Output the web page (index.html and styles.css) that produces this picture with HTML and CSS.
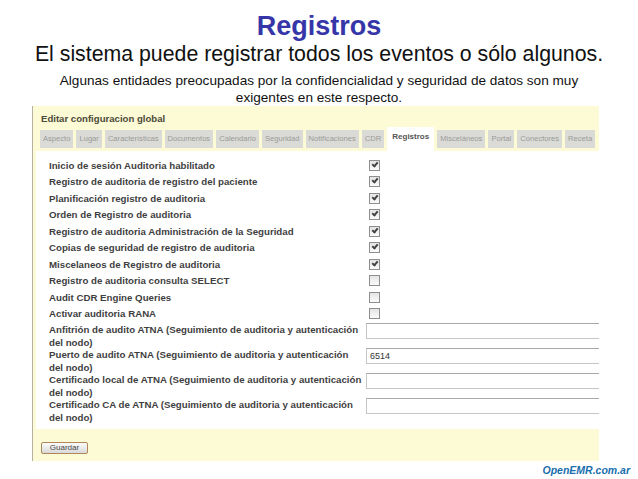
FILE: index.html
```html
<!DOCTYPE html>
<html>
<head>
    <meta charset="utf-8">
    <link rel="stylesheet" href="styles.css">
</head>
<body>
    <div class="slide">
        <h1 class="title">Registros</h1>
        <p class="lead">El sistema puede registrar todos los eventos o sólo algunos.</p>
        <p class="note">Algunas entidades preocupadas por la confidencialidad y seguridad de datos son muy<br>exigentes en este respecto.</p>

        <div class="panel">
            <div class="panel-head">Editar configuracion global</div>
            <ul class="tabs">
                <li>Aspecto</li>
                <li>Lugar</li>
                <li>Características</li>
                <li>Documentos</li>
                <li>Calendario</li>
                <li>Seguridad</li>
                <li>Notificaciones</li>
                <li>CDR</li>
                <li class="active">Registros</li>
                <li>Misceláneos</li>
                <li>Portal</li>
                <li>Conectores</li>
                <li>Receta</li>
            </ul>

            <div class="panel-body">
                <div class="row"><label>Inicio de sesión Auditoria habilitado</label><span class="check on"></span></div>
                <div class="row"><label>Registro de auditoria de registro del paciente</label><span class="check on"></span></div>
                <div class="row"><label>Planificación registro de auditoria</label><span class="check on"></span></div>
                <div class="row"><label>Orden de Registro de auditoria</label><span class="check on"></span></div>
                <div class="row"><label>Registro de auditoria Administración de la Seguridad</label><span class="check on"></span></div>
                <div class="row"><label>Copias de seguridad de registro de auditoria</label><span class="check on"></span></div>
                <div class="row"><label>Miscelaneos de Registro de auditoria</label><span class="check on"></span></div>
                <div class="row"><label>Registro de auditoria consulta SELECT</label><span class="check"></span></div>
                <div class="row"><label>Audit CDR Engine Queries</label><span class="check"></span></div>
                <div class="row"><label>Activar auditoria RANA</label><span class="check"></span></div>
                <div class="row tall"><label>Anfitrión de audito ATNA (Seguimiento de auditoria y autenticación<br>del nodo)</label><input type="text" value=""></div>
                <div class="row tall"><label>Puerto de audito ATNA (Seguimiento de auditoria y autenticación<br>del nodo)</label><input type="text" value="6514"></div>
                <div class="row tall"><label>Certificado local de ATNA (Seguimiento de auditoria y autenticación<br>del nodo)</label><input type="text" value=""></div>
                <div class="row tall"><label>Certificado CA de ATNA (Seguimiento de auditoria y autenticación<br>del nodo)</label><input type="text" value=""></div>
            </div>

            <div class="panel-foot">
                <button type="button">Guardar</button>
            </div>
        </div>

        <div class="brand">OpenEMR.com.ar</div>
    </div>
</body>
</html>
```

FILE: styles.css
```css
body {
    margin: 0;
    background: #fff;
    font-family: "Liberation Sans", Arial, sans-serif;
    color: #111;
}

.slide {
    width: 638px;
    height: 479px;
    overflow: hidden;
}

.title {
    margin: 10px 0 0;
    font-size: 27px;
    line-height: 32px;
    text-align: center;
    color: #3636a8;
}

.lead {
    margin: 0;
    font-size: 21.3px;
    line-height: 25px;
    text-align: center;
}

.note {
    margin: 5px 0 0;
    font-size: 13.6px;
    line-height: 17px;
    text-align: center;
}

/* screenshot of the settings page */
.panel {
    margin: 0 0 0 32px;
    width: 566px;
    border-left: 1px solid #b3b2a2;
    background: #fdfad6;
    overflow: hidden;
}

.panel-head {
    height: 21px;
    padding: 7px 0 0 8px;
    box-sizing: border-box;
    font-size: 9.6px;
    font-weight: bold;
    color: #4a4a38;
}

.tabs {
    display: flex;
    align-items: flex-end;
    gap: 3px;
    margin: 0;
    padding: 0 0 0 7px;
    list-style: none;
    height: 24px;
}

.tabs li {
    height: 18px;
    line-height: 18px;
    padding: 0 3px;
    margin-bottom: 3px;
    background: #dadad6;
    color: #9a9a98;
    font-size: 7.6px;
    white-space: nowrap;
}

.tabs li.active {
    height: 24px;
    line-height: 20px;
    margin-bottom: 0;
    padding: 0 5px;
    background: #fff;
    color: #555;
    font-weight: bold;
    font-size: 8px;
}

.panel-body {
    margin-left: 3px;
    padding: 6px 0 7px 13px;
    background: #fff;
}

.row {
    display: grid;
    grid-template-columns: 317px 1fr;
    align-items: center;
    height: 16.5px;
}

.row label {
    font-size: 9.7px;
    font-weight: bold;
    color: #3f3f3f;
    white-space: nowrap;
}

.row.tall {
    height: 25px;
    align-items: start;
}

.row.tall label {
    line-height: 13px;
    padding-top: 1px;
}

.check {
    position: relative;
    width: 9px;
    height: 9px;
    margin-left: 3px;
    border: 1px solid #8e8e8e;
    background: linear-gradient(#e4e4e4, #fbfbfb);
}

.check.on::after {
    content: "";
    position: absolute;
    left: 2px;
    top: 1px;
    width: 4px;
    height: 2px;
    border-left: 2px solid #444;
    border-bottom: 2px solid #444;
    transform: rotate(-50deg);
}

.row input {
    width: 250px;
    height: 16px;
    margin: 1px 0 0;
    padding: 0 3px;
    box-sizing: border-box;
    border: 1px solid #c6c6c6;
    border-top-color: #a8a8a8;
    border-right: none;
    font-family: "Liberation Sans", Arial, sans-serif;
    font-size: 9px;
    color: #333;
    background: #fff;
}

.panel-foot {
    height: 32px;
    padding: 13px 0 0 8px;
    box-sizing: border-box;
}

.panel-foot button {
    display: block;
    width: 47px;
    height: 12px;
    padding: 0;
    border: 1px solid #b0875a;
    border-radius: 2px;
    background: linear-gradient(#fbfbfb, #d9d9d9);
    font-family: inherit;
    font-size: 8px;
    line-height: 10px;
    color: #4a4a4a;
}

.brand {
    margin-top: 3px;
    padding-right: 8px;
    text-align: right;
    font-size: 10.5px;
    font-style: italic;
    font-weight: bold;
    color: #1b6fae;
}
```
